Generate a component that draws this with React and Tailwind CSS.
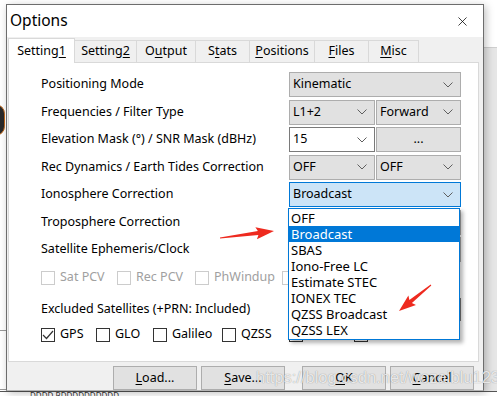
import { X } from 'lucide-react';

const Chevron = () => (
  <svg width="10" height="6" viewBox="0 0 10 6" className="shrink-0">
    <path d="M0.5 0.5 L5 5 L9.5 0.5" fill="none" stroke="#5f5f5f" strokeWidth="1" />
  </svg>
);

// Windows-style combo box
const Combo = ({ text, w, variant = 'gray' }) => {
  const look = {
    gray: 'bg-[#e1e1e1] border-[#adadad]',
    white: 'bg-white border-[#7a7a7a]',
    focus: 'bg-[#cce4f7] border-[#0078d7]',
  }[variant];
  return (
    <div className={`h-[25px] ${w} border ${look} flex items-center justify-between pl-[3px] pr-[7px] shrink-0`}>
      <span>{text}</span>
      <Chevron />
    </div>
  );
};

const Check = ({ checked, disabled, label, w }) => (
  <div className={`flex items-center gap-[5px] ${w} shrink-0`}>
    <div
      className={`w-[14px] h-[14px] border bg-white flex items-center justify-center ${
        disabled ? 'border-[#cccccc]' : 'border-[#333333]'
      }`}
    >
      {checked && (
        <svg width="12" height="10" viewBox="0 0 12 10">
          <path d="M1 5 L4.5 8.5 L11 1" fill="none" stroke="#333" strokeWidth="1.2" />
        </svg>
      )}
    </div>
    <span className={disabled ? 'text-[#a0a0a0]' : ''}>{label}</span>
  </div>
);

const Acc = ({ pre = '', u, post = '' }) => (
  <span>
    {pre}
    <span className="underline underline-offset-2">{u}</span>
    {post}
  </span>
);

const tabs = [
  { w: 'w-[62px]', el: <Acc pre="Setting" u="2" /> },
  { w: 'w-[59px]', el: <Acc pre="O" u="u" post="tput" /> },
  { w: 'w-[54px]', el: <Acc pre="S" u="t" post="ats" /> },
  { w: 'w-[65px]', el: <Acc u="P" post="ositions" /> },
  { w: 'w-[54px]', el: <Acc u="F" post="iles" /> },
  { w: 'w-[50px]', el: <Acc u="M" post="isc" /> },
];

const ionoOptions = ['OFF', 'Broadcast', 'SBAS', 'Iono-Free LC', 'Estimate STEC', 'IONEX TEC', 'QZSS Broadcast', 'QZSS LEX'];

const Row = ({ label, children }) => (
  <div className="flex items-center h-[25px] mb-[2.5px]">
    <div className="w-[280px] pl-[32px] shrink-0">{label}</div>
    <div className="flex gap-[1px]">{children}</div>
  </div>
);

export default function App() {
  return (
    <div className="w-[497px] h-[396px] relative overflow-hidden bg-white font-['Noto_Sans',sans-serif] text-[12.5px] text-black leading-none">
      {/* desktop behind the dialog */}
      <div className="absolute right-0 top-[47px] w-[20px] h-[350px] bg-[#e6e6e6] border-t border-[#cfcfcf]" />
      <div className="absolute left-[-14px] top-[104px] w-[19px] h-[32px] rounded-full bg-[#2a2a2a] border border-[#c56a1c]" />
      <div className="absolute left-0 top-[330px] w-[6px] h-[60px] border-t border-b border-[#999]" />
      <div className="absolute left-0 top-[391px] w-full h-[5px] bg-white border-t border-[#555] overflow-hidden text-[8px] text-[#333] pl-[30px]">
        DDDD BDDDDDDDDDD
      </div>

      {/* dialog window */}
      <div className="ml-[6px] mt-[4px] w-[478px] h-[387px] border border-[#6d6d6d] border-b-[#b5b5b5] bg-[#f0f0f0] shadow-[2px_2px_8px_rgba(0,0,0,0.25)] flex flex-col relative">
        <div className="h-[32px] bg-white flex items-center justify-between pl-[3px] pr-[13px] shrink-0">
          <span className="text-[15.5px]">Options</span>
          <X size={15} strokeWidth={1.2} className="text-black" />
        </div>

        {/* tabs */}
        <div className="h-[25px] flex items-end pl-[1px] shrink-0">
          <div className="w-[67px] h-[25px] bg-white border border-b-0 border-[#d9d9d9] flex items-center justify-center relative z-10 -mb-px">
            <Acc pre="Setting" u="1" />
          </div>
          {tabs.map((t, i) => (
            <div key={i} className={`${t.w} h-[22px] border border-l-0 border-b-0 border-[#d9d9d9] bg-[#f0f0f0] flex items-center justify-center`}>
              {t.el}
            </div>
          ))}
        </div>

        {/* panel */}
        <div className="ml-[1px] w-[471px] h-[300px] bg-white border border-[#d9d9d9] pt-[9px] relative shrink-0">
          <Row label="Positioning Mode">
            <Combo text="Kinematic" w="w-[172px]" />
          </Row>
          <Row label="Frequencies / Filter Type">
            <Combo text="L1+2" w="w-[86px]" />
            <Combo text="Forward" w="w-[85px]" />
          </Row>
          <Row label="Elevation Mask (°) / SNR Mask (dBHz)">
            <Combo text="15" w="w-[86px]" variant="white" />
            <div className="w-[85px] h-[25px] bg-[#e1e1e1] border border-[#adadad] flex items-center justify-center">...</div>
          </Row>
          <Row label="Rec Dynamics / Earth Tides Correction">
            <Combo text="OFF" w="w-[86px]" />
            <Combo text="OFF" w="w-[85px]" />
          </Row>
          <Row label="Ionosphere Correction">
            <Combo text="Broadcast" w="w-[172px]" variant="focus" />
          </Row>
          <Row label="Troposphere Correction">
            <Combo text="Saastamoinen" w="w-[172px]" />
          </Row>
          <Row label="Satellite Ephemeris/Clock">
            <Combo text="Broadcast" w="w-[172px]" />
          </Row>

          <div className="flex items-center h-[25px] pl-[32px] mt-[3px]">
            <Check disabled label="Sat PCV" w="w-[76px]" />
            <Check disabled label="Rec PCV" w="w-[78px]" />
            <Check disabled label="PhWindup" w="w-[87px]" />
            <Check disabled label="Reject Eclipse" w="w-[100px]" />
          </div>
          <div className="flex items-center h-[25px] mt-[7px]">
            <div className="w-[280px] pl-[32px] shrink-0">Excluded Satellites (+PRN: Included)</div>
            <div className="w-[172px] h-[23px] border border-[#7a7a7a] bg-white" />
          </div>
          <div className="flex items-center h-[25px] pl-[32px]">
            <Check checked label="GPS" w="w-[55px]" />
            <Check label="GLO" w="w-[57px]" />
            <Check label="Galileo" w="w-[69px]" />
            <Check label="QZSS" w="w-[67px]" />
            <Check label="SBAS" w="w-[65px]" />
            <Check label="BeiDou" w="w-[70px]" />
          </div>

          {/* open dropdown list */}
          <div className="absolute left-[279px] top-[145px] w-[172px] bg-white border border-[#0078d7] py-[1px] shadow-[3px_3px_4px_rgba(0,0,0,0.3)] z-20 text-[13px]">
            {ionoOptions.map((o) => (
              <div
                key={o}
                className={`h-[16px] flex items-center pl-[2px] ${o === 'Broadcast' ? 'bg-[#0078d7] text-white' : ''}`}
              >
                {o}
              </div>
            ))}
          </div>
        </div>

        {/* buttons */}
        <div className="flex mt-[4px] pl-[106px]">
          <div className="w-[84px] h-[24px] bg-[#e1e1e1] border border-[#adadad] flex items-center justify-center">
            <Acc u="L" post="oad..." />
          </div>
          <div className="w-[84px] h-[24px] bg-[#e1e1e1] border border-[#adadad] flex items-center justify-center ml-[4px]">
            <Acc u="S" post="ave..." />
          </div>
          <div className="w-[84px] h-[24px] bg-[#e1e1e1] border border-[#adadad] flex items-center justify-center ml-[17px]">
            <Acc u="O" post="K" />
          </div>
          <div className="w-[84px] h-[24px] bg-[#e1e1e1] border border-[#adadad] flex items-center justify-center ml-[4px]">
            <Acc u="C" post="ancel" />
          </div>
        </div>
      </div>

      {/* watermark */}
      <div className="absolute left-[256px] top-[369px] font-['Liberation_Sans',sans-serif] text-[16.5px] text-white/80 [text-shadow:0_0_1px_rgba(0,0,0,0.45)] z-30">
        https://blog.csdn.net/wozaiblu123
      </div>

      {/* annotation arrows */}
      <svg className="absolute left-0 top-0 z-30" width="497" height="396" viewBox="0 0 497 396">
        <polygon
          fill="#ee2a1f"
          points="220.06,238.5 258.39,235.04 256.92,239.27 274,231 255.38,227.37 257.87,231.08 219.94,237.5"
        />
        <polygon
          fill="#ee2a1f"
          points="431.32,285.39 411.9,303.09 415.97,304.94 399,311 408.41,295.62 409.38,299.99 430.68,284.61"
        />
      </svg>
    </div>
  );
}
